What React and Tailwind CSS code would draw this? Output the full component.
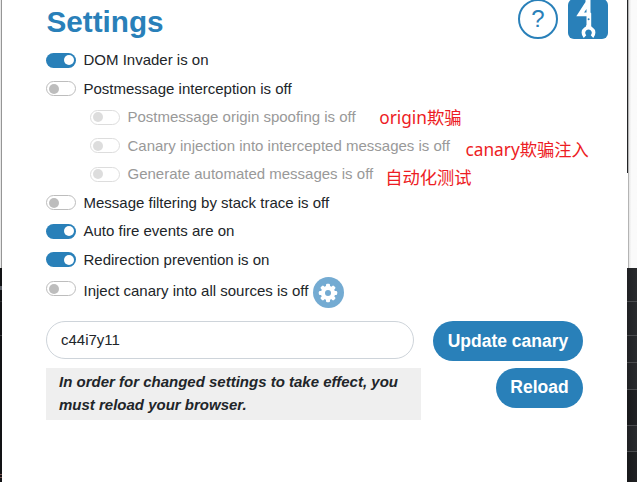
const TEETH = [0, 45, 90, 135];

function GearIcon() {
  return (
    <svg viewBox="-10 -10 20 20" className="size-5">
      {TEETH.map((angle) => (
        <rect key={angle} x="-2" y="-9.2" width="4" height="18.4" rx="1.2" fill="#fff" transform={`rotate(${angle})`} />
      ))}
      <circle r="7.2" fill="#fff" />
      <circle r="3" fill="#74abd2" />
    </svg>
  );
}

function Toggle({ on, muted }) {
  if (on) {
    return (
      <span className="flex h-[15px] w-[30px] shrink-0 items-center justify-end rounded-full bg-[#2980b9] pr-[2px]">
        <span className="size-[10px] rounded-full bg-white" />
      </span>
    );
  }
  return (
    <span
      className={`flex h-[15px] w-[30px] shrink-0 items-center rounded-full border border-[#bdbdbd] pl-[2px] ${muted ? "opacity-50" : ""}`}
    >
      <span className="size-[10px] rounded-full bg-[#bdbdbd]" />
    </span>
  );
}

function Row({ on, nested, label, note, noteClass }) {
  return (
    <div className={`flex h-[28.5px] items-center ${nested ? "pl-11" : ""}`}>
      <Toggle on={on} muted={nested} />
      <span className={`ml-[7.5px] text-[15px] leading-5 whitespace-nowrap ${nested ? "text-[#999999]" : "text-[#212529]"}`}>
        {label}
      </span>
      {note && (
        <span
          className={`relative text-[17.3px] leading-5 whitespace-nowrap text-[#ed1c24] font-['Noto_Sans','Noto_Sans_CJK_SC',sans-serif] ${noteClass}`}
        >
          {note}
        </span>
      )}
    </div>
  );
}

function WrenchIcon() {
  return (
    <svg viewBox="0 0 40 40" className="size-10">
      <path d="M17.5 1h5v12.500l.7.8V28h-4.700V17.300H8.300L17.500 3z" fill="#fff" />
      <path d="M18.500 10 16 13.600h2.500z" fill="#2980b9" />
      <circle cx="20.6" cy="20.3" r="1" fill="#2980b9" />
      <path
        d="M17 37.600C14.800 35.500 14.800 31.500 17.300 29.900C19 28.700 22 28.700 23.700 29.900C26.200 31.500 26.200 35.500 24 37.600"
        fill="none"
        stroke="#fff"
        strokeWidth="3.6"
      />
      <path d="M18.500 26h4.200l1.500 4h-7.200z" fill="#fff" />
    </svg>
  );
}

export default function App() {
  return (
    <div className="flex h-[482px] w-[637px] overflow-hidden bg-white font-['Liberation_Sans',Arial,sans-serif]">
      <div className="flex w-[2px] flex-col">
        <div className="h-[268px] border-r border-[#969696] bg-[#e8e8e8]" />
        <div className="h-[18px] bg-[#121315]" />
        <div className="h-[4px] bg-[#5b5e66]" />
        <div className="h-[12px] border-b border-[#2c2d30] bg-[#121315]" />
        <div className="h-[34px] border-b border-[#3a3b3e] bg-[#121315]" />
        <div className="h-[139px] border-b border-[#7a5550] bg-[#121315]" />
        <div className="h-[3px] border-b border-[#7a5550] bg-[#121315]" />
        <div className="flex-1 bg-[#121315]" />
      </div>

      <main className="w-[625px] shrink-0 pl-[44px]">
        <header className="flex h-[46px] w-[562px]">
          <h1 className="mt-[2px] flex-1 pl-[0.5px] text-[29.7px] leading-10 font-bold text-[#2980b9]">Settings</h1>
          <button className="-mt-px flex size-10 items-center justify-center rounded-full border-2 border-[#2980b9] text-[24px] leading-none text-[#2980b9]">
            ?
          </button>
          <button className="-mt-px ml-[10px] size-10 overflow-hidden rounded-[6px] bg-[#2980b9]">
            <WrenchIcon />
          </button>
        </header>

        <Row on label="DOM Invader is on" />
        <Row label="Postmessage interception is off" />
        <Row nested label="Postmessage origin spoofing is off" note="origin欺骗" noteClass="ml-[23.5px] top-[1px]" />
        <Row nested label="Canary injection into intercepted messages is off" note="canary欺骗注入" noteClass="ml-[15.5px] top-[4px]" />
        <Row nested label="Generate automated messages is off" note="自动化测试" noteClass="ml-[12px] top-[4px]" />
        <Row label="Message filtering by stack trace is off" />
        <Row on label="Auto fire events are on" />
        <Row on label="Redirection prevention is on" />

        <div className="flex h-[47px] items-start">
          <div className="mt-[7px]">
            <Toggle />
          </div>
          <span className="mt-[7px] ml-[7.5px] text-[15px] leading-5 whitespace-nowrap text-[#212529]">
            Inject canary into all sources is off
          </span>
          <button className="mt-[3px] ml-[4.5px] flex size-[31px] items-center justify-center rounded-full bg-[#74abd2]">
            <GearIcon />
          </button>
        </div>

        <div className="flex w-[537px] justify-between">
          <input
            className="h-[38px] w-[368px] rounded-full border border-[#ced4da] px-[14px] pb-[2px] text-[15px] text-[#212529]"
            defaultValue="c44i7y11"
          />
          <button className="h-10 w-[150px] rounded-full bg-[#2980b9] pt-px text-[17.5px] leading-none font-bold text-white">
            Update canary
          </button>
        </div>
        <div className="mt-[7px] flex w-[537px] justify-between">
          <p className="h-[52px] w-[375px] bg-[#efefef] px-[13px] pt-[2px] text-[15px] leading-[23px] font-bold text-[#212529] italic">
            In order for changed settings to take effect, you must reload your browser.
          </p>
          <button className="h-10 w-[87px] rounded-full bg-[#2980b9] pb-px text-[17.5px] leading-none font-bold text-white">
            Reload
          </button>
        </div>
      </main>

      <aside className="flex w-[10px] shrink-0 flex-col">
        <div className="flex h-[268px]">
          <div className="h-[173px] w-px bg-[#222326]" />
          <div className="w-px bg-[#b4b4b4]" />
          <div className="flex-1 bg-linear-to-r from-[#e6e6e6] to-[#fafafa] to-30%" />
        </div>
        <div className="h-[34px] border-b border-[#4a4b4e] bg-linear-to-r from-[#202124] to-[#292a2d]" />
        <div className="h-[34px] border-b border-[#4a4b4e] bg-linear-to-r from-[#202124] to-[#292a2d]" />
        <div className="h-[27px] border-b border-[#4a4b4e] bg-linear-to-r from-[#202124] to-[#292a2d]" />
        <div className="h-[27px] border-b border-[#4a4b4e] bg-linear-to-r from-[#202124] to-[#292a2d]" />
        <div className="h-[36px] border-b border-[#4a4b4e] bg-linear-to-r from-[#18191b] to-[#202124]" />
        <div className="h-[26px] border-b border-[#4a4b4e] bg-linear-to-r from-[#202124] to-[#292a2d]" />
        <div className="flex-1 bg-linear-to-r from-[#18191b] to-[#202124]" />
      </aside>
    </div>
  );
}
